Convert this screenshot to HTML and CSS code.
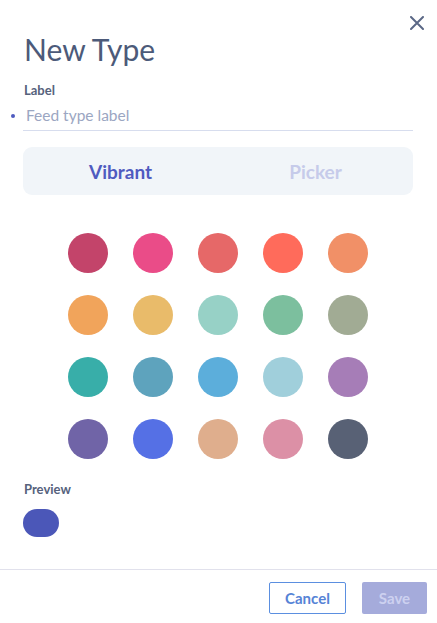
FILE: index.html
```html
<!DOCTYPE html>
<html lang="en">
<head>
    <meta charset="UTF-8">
    <meta name="viewport" content="width=device-width, initial-scale=1.0">
    <title>New Type</title>
    <link rel="stylesheet" href="styles.css">
</head>
<body>
    <div class="modal">
        <button class="close-btn" aria-label="Close">
            <svg width="14" height="14" viewBox="0 0 14 14">
                <path d="M1 1 L13 13 M13 1 L1 13" stroke="#5b6886" stroke-width="2" stroke-linecap="round"/>
            </svg>
        </button>

        <div class="modal-body">
            <h1 class="title">New Type</h1>

            <label class="field-label" for="type-label">Label</label>
            <div class="input-row">
                <span class="required-dot"></span>
                <input id="type-label" class="text-input" type="text" placeholder="Feed type label">
            </div>

            <div class="segmented">
                <div class="segment active">Vibrant</div>
                <div class="segment">Picker</div>
            </div>

            <div class="swatches">
                <span class="swatch" style="background:#c3446a"></span>
                <span class="swatch" style="background:#ea4c88"></span>
                <span class="swatch" style="background:#e66868"></span>
                <span class="swatch" style="background:#ff6b5b"></span>
                <span class="swatch" style="background:#f19067"></span>

                <span class="swatch" style="background:#f1a45b"></span>
                <span class="swatch" style="background:#e9bb6a"></span>
                <span class="swatch" style="background:#97d1c6"></span>
                <span class="swatch" style="background:#7cbf9e"></span>
                <span class="swatch" style="background:#a1ab94"></span>

                <span class="swatch" style="background:#38aea9"></span>
                <span class="swatch" style="background:#5ea3bd"></span>
                <span class="swatch" style="background:#5caedb"></span>
                <span class="swatch" style="background:#a0cfdb"></span>
                <span class="swatch" style="background:#a67db7"></span>

                <span class="swatch" style="background:#7064a7"></span>
                <span class="swatch" style="background:#5570e5"></span>
                <span class="swatch" style="background:#dfae8d"></span>
                <span class="swatch" style="background:#dc90a6"></span>
                <span class="swatch" style="background:#586175"></span>
            </div>

            <div class="field-label">Preview</div>
            <div class="preview-pill"></div>
        </div>

        <div class="modal-footer">
            <button class="btn btn-outline">Cancel</button>
            <button class="btn btn-primary" disabled>Save</button>
        </div>
    </div>
</body>
</html>
```

FILE: styles.css
```css
body {
    margin: 0;
    font-family: "Lato", "Noto Sans", sans-serif;
    background: #fff;
}

.modal {
    position: relative;
    width: 437px;
    height: 623px;
}

.close-btn {
    position: absolute;
    top: 16px;
    right: 13px;
    border: none;
    background: none;
    padding: 0;
    cursor: pointer;
}

.modal-body {
    padding: 31px 24px 0 23px;
}

.title {
    margin: 0 0 15px 1px;
    font-size: 30px;
    font-weight: 400;
    line-height: 36px;
    color: #4c5a79;
}

.field-label {
    display: block;
    margin-left: 1px;
    font-size: 13px;
    font-weight: 700;
    line-height: 16px;
    color: #56627c;
}

.input-row {
    position: relative;
    border-bottom: 1px solid #d7ddee;
    margin-top: 5px;
}

.required-dot {
    position: absolute;
    left: -12px;
    top: 11px;
    width: 4px;
    height: 4px;
    border-radius: 50%;
    background: #4f5bc0;
}

.text-input {
    display: block;
    width: 100%;
    box-sizing: border-box;
    border: none;
    outline: none;
    padding: 2px 0 5px 3px;
    font-family: inherit;
    font-size: 15.5px;
    line-height: 20px;
    color: #4c5a79;
    background: transparent;
}

.text-input::placeholder {
    color: #9ba6c2;
}

.segmented {
    display: flex;
    margin-top: 16px;
    height: 48px;
    border-radius: 9px;
    background: #f1f5f9;
}

.segment {
    flex: 1;
    display: flex;
    align-items: center;
    justify-content: center;
    font-size: 19px;
    font-weight: 700;
    color: #c6cbea;
}

.segment.active {
    color: #4f5bc0;
}

.swatches {
    display: grid;
    grid-template-columns: repeat(5, 40px);
    column-gap: 25px;
    row-gap: 22px;
    justify-content: center;
    margin-top: 38px;
}

.swatch {
    width: 40px;
    height: 40px;
    border-radius: 50%;
}

.swatches + .field-label {
    margin-top: 22px;
}

.preview-pill {
    width: 36px;
    height: 28px;
    margin-top: 12px;
    border-radius: 14px;
    background: #4b57b8;
}

.modal-footer {
    position: absolute;
    left: 0;
    right: 0;
    bottom: 0;
    display: flex;
    justify-content: flex-end;
    gap: 16px;
    padding: 12px 10px 9px 0;
    border-top: 1px solid #e1e1ec;
}

.btn {
    height: 32px;
    border-radius: 2px;
    font-family: inherit;
    font-size: 15px;
    font-weight: 700;
    cursor: pointer;
}

.btn-outline {
    width: 77px;
    border: 1px solid #5b8fe0;
    background: #fff;
    color: #5683d6;
}

.btn-primary {
    width: 65px;
    border: none;
    background: #a5abdb;
    color: #cdd1f0;
}
```
